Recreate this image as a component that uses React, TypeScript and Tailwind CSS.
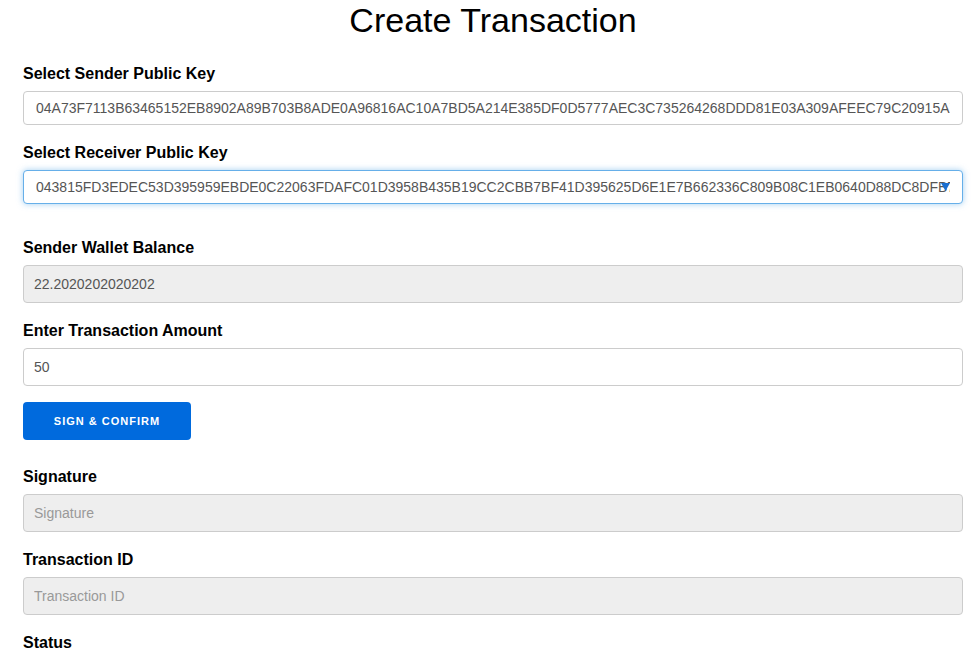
import React from "react";

const senderKey =
  "04A73F7113B63465152EB8902A89B703B8ADE0A96816AC10A7BD5A214E385DF0D5777AEC3C735264268DDD81E03A309AFEEC79C20915A7E2C4B19D3";
const receiverKey =
  "043815FD3EDEC53D395959EBDE0C22063FDAFC01D3958B435B19CC2CBB7BF41D395625D6E1E7B662336C809B08C1EB0640D88DC8DFB7A1E92C4D05";

const Label: React.FC<{ children: React.ReactNode; className?: string }> = ({ children, className }) => (
  <label className={`block text-[16px] leading-5 font-bold text-black mb-[7px] ${className || ""}`}>{children}</label>
);

const CreateTransaction: React.FC = () => {
  return (
    <div className="min-h-[655px] bg-white" style={{ fontFamily: '"Liberation Sans", Arial, sans-serif' }}>
      <h1 className="text-center pl-[12px] text-[34px] leading-10 font-normal text-black">Create Transaction</h1>

      <div className="ml-[23px] w-[940px]">
        {/* Sender */}
        <Label className="mt-[24px]">Select Sender Public Key</Label>
        <div className="h-[34px] border border-[#ccc] rounded-[4px] bg-white px-3 flex items-center">
          <div className="w-full overflow-hidden">
            <span className="whitespace-nowrap text-[14px] text-[#555]">{senderKey}</span>
          </div>
        </div>

        {/* Receiver */}
        <Label className="mt-[18px]">Select Receiver Public Key</Label>
        <div className="relative h-[34px] border border-[#66afe9] rounded-[4px] bg-white shadow-[0_0_6px_rgba(102,175,233,0.6)] px-3 flex items-center">
          <div className="w-full overflow-hidden">
            <span className="whitespace-nowrap text-[14px] text-[#555]">{receiverKey}</span>
          </div>
          <svg className="absolute right-[12px] top-[12px]" width="9" height="8" viewBox="0 0 9 8">
            <path d="M0 0 L9 0 L4.5 8 Z" fill="#1a6fd1" />
          </svg>
        </div>

        {/* Balance */}
        <Label className="mt-[34px]">Sender Wallet Balance</Label>
        <input
          readOnly
          value="22.2020202020202"
          className="block w-full h-[38px] border border-[#ccc] rounded-[4px] bg-[#eee] px-[10px] text-[14px] text-[#555] outline-none"
        />

        {/* Amount */}
        <Label className="mt-[18px]">Enter Transaction Amount</Label>
        <input
          readOnly
          value="50"
          className="block w-full h-[38px] border border-[#ccc] rounded-[4px] bg-white px-[10px] text-[14px] text-[#555] outline-none"
        />

        <button className="mt-[16px] w-[168px] h-[38px] rounded-[4px] bg-[#006add] text-white text-[11px] font-bold tracking-[1px] uppercase">
          Sign &amp; Confirm
        </button>

        {/* Signature */}
        <Label className="mt-[27px]">Signature</Label>
        <input
          readOnly
          placeholder="Signature"
          className="block w-full h-[38px] border border-[#ccc] rounded-[4px] bg-[#eee] px-[10px] text-[14px] text-[#555] placeholder:text-[#999] outline-none"
        />

        {/* Transaction ID */}
        <Label className="mt-[18px]">Transaction ID</Label>
        <input
          readOnly
          placeholder="Transaction ID"
          className="block w-full h-[38px] border border-[#ccc] rounded-[4px] bg-[#eee] px-[10px] text-[14px] text-[#555] placeholder:text-[#999] outline-none"
        />

        <Label className="mt-[18px]">Status</Label>
      </div>
    </div>
  );
};

export default function App() {
  return <CreateTransaction />;
}
